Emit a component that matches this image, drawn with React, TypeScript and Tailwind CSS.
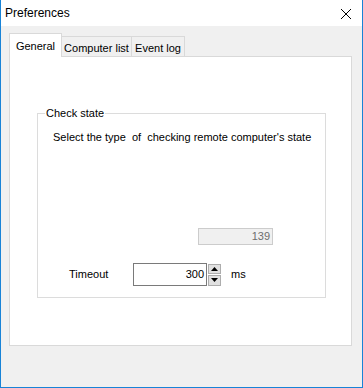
import React from 'react';

const font = { fontFamily: '"Liberation Sans", Arial, sans-serif' };

const Tab = ({ label, width, active }: { label: string; width: string; active?: boolean }) => (
  <div
    className={
      active
        ? `relative z-10 -mb-px h-[24px] ${width} border border-b-0 border-[#d9d9d9] bg-white pt-[4px] text-center text-[11px] text-black`
        : `mt-[3px] h-[20px] ${width} border border-b-0 border-l-0 border-[#d9d9d9] bg-[#f0f0f0] pt-[3px] text-center text-[11px] text-black`
    }
  >
    {label}
  </div>
);

export default function App() {
  return (
    <div className="h-[388px] w-[363px] bg-white text-black" style={font}>
      <div className="flex h-full flex-col border border-t-0 border-[#1883d7]">
        {/* title bar */}
        <div className="flex h-[26px] items-center justify-between bg-white pl-[4px] pr-[10px]">
          <span className="text-[12px]">Preferences</span>
          <svg width="12" height="12" viewBox="0 0 12 12" className="mt-[1px]">
            <path d="M1 1 L11 11 M11 1 L1 11" stroke="#000" strokeWidth="1" />
          </svg>
        </div>

        {/* body */}
        <div className="flex flex-1 flex-col bg-[#f0f0f0] px-[8px] pt-[7px]">
          <div className="flex items-end">
            <Tab label="General" width="w-[53px]" active />
            <Tab label="Computer list" width="w-[70px]" />
            <Tab label="Event log" width="w-[53px]" />
          </div>
          <div className="h-[290px] w-[343px] border border-[#d9d9d9] bg-white px-[27px] pt-[49px]">
            {/* group box */}
            <fieldset className="h-[192px] w-[289px] min-w-0 border border-[#dcdcdc] px-[15px] pb-0 pt-0">
              <legend className="-ml-[8px] px-[1px] text-[11px] leading-[14px]">Check state</legend>
              <div className="mt-[11px] text-[11px] leading-[13px] whitespace-pre">
                {"Select the type  of  checking remote computer's state"}
              </div>
              <div className="mt-[84px] flex justify-end pr-[37px]">
                <div className="flex h-[17px] w-[75px] items-center justify-end border border-[#cccccc] bg-[#f0f0f0] pr-[2px] text-[11px] text-[#6d6d6d]">
                  139
                </div>
              </div>
              <div className="mt-[18px] flex items-center">
                <span className="ml-[16px] w-[64px] text-[11px]">Timeout</span>
                <div className="flex h-[23px] w-[74px] items-center justify-end border border-[#7a7a7a] bg-white pr-[2px] text-[11px]">
                  300
                </div>
                <div className="ml-[1px] flex h-[22px] w-[13px] flex-col gap-[1px]">
                  <div className="flex flex-1 items-center justify-center border border-[#adadad] bg-[#e1e1e1]">
                    <svg width="7" height="4" viewBox="0 0 7 4"><path d="M3.5 0 L7 4 L0 4 Z" fill="#000" /></svg>
                  </div>
                  <div className="flex flex-1 items-center justify-center border border-[#adadad] bg-[#e1e1e1]">
                    <svg width="7" height="4" viewBox="0 0 7 4"><path d="M0 0 L7 0 L3.5 4 Z" fill="#000" /></svg>
                  </div>
                </div>
                <span className="ml-[10px] text-[11px]">ms</span>
              </div>
            </fieldset>
          </div>
        </div>
      </div>
    </div>
  );
}
